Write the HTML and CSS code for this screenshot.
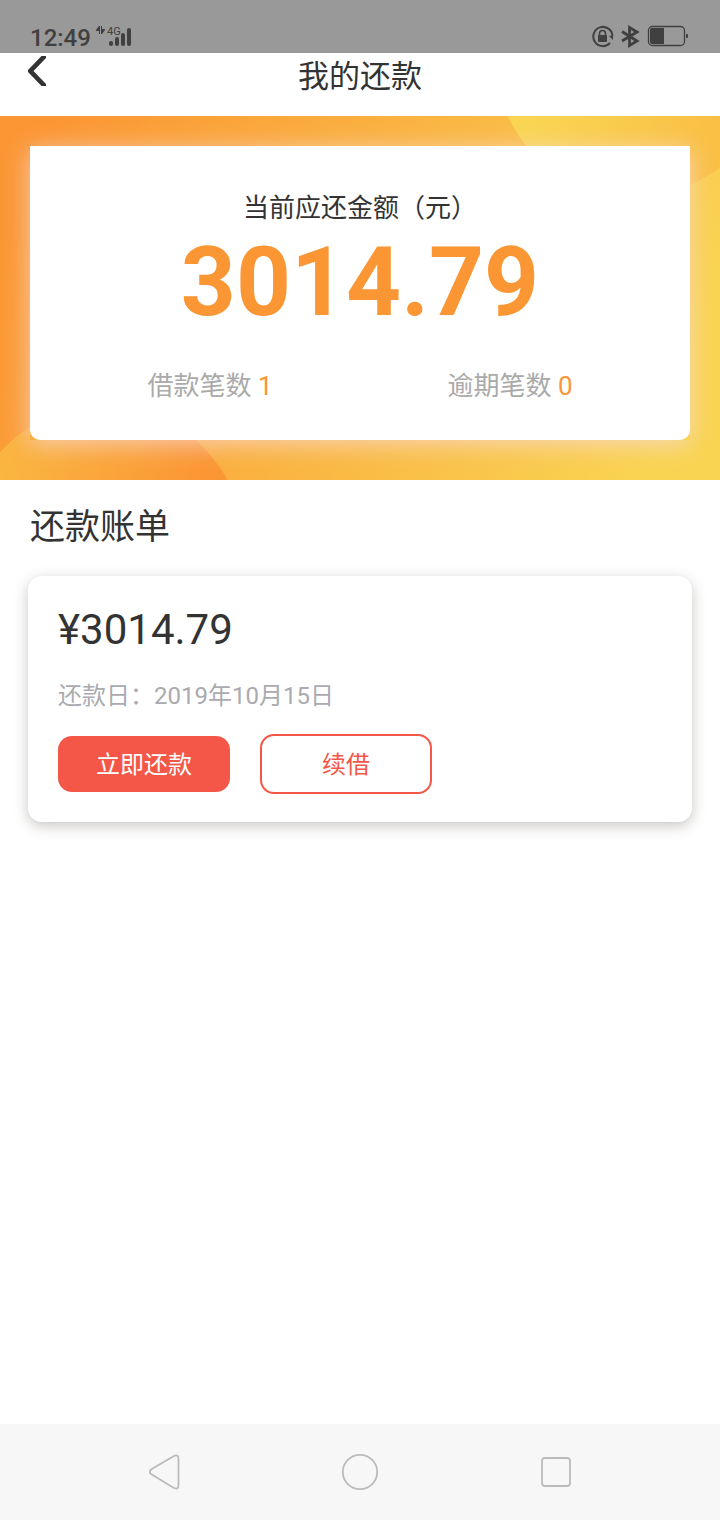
FILE: index.html
```
<!DOCTYPE html>
<html lang="zh-CN">
<head>
<meta charset="utf-8">
<meta name="viewport" content="width=device-width, initial-scale=1">
<title>我的还款</title>
<link rel="stylesheet" href="styles.css">
</head>
<body>
<div class="screen">
  <div class="status">
    <div class="status-left">
      <span class="clock">12:49</span>
      <svg class="signal" width="37" height="26" viewBox="0 0 37 26" aria-hidden="true">
        <path d="M0 5L3 1H4V9H3V6H0ZM5 1H6V4H9V5L6 9H5Z" fill="#404040"/>
        <text x="11" y="10" class="network">4G</text>
        <g fill="#404040">
          <rect x="13" y="16" width="4" height="5" rx="2"/>
          <rect x="19" y="12" width="4" height="9" rx="2"/>
          <rect x="25" y="8" width="4" height="13" rx="2"/>
          <rect x="31" y="3" width="4" height="18" rx="2"/>
        </g>
      </svg>
    </div>
    <svg class="status-icons" width="98" height="24" viewBox="0 0 98 24" fill="none" stroke="#404040" aria-hidden="true">
      <path d="M18 19A9.600 9.600 0 1 1 20.500 12" stroke-width="2"/>
      <path d="M17 12L21 11.500V16Z" fill="#404040" stroke="none"/>
      <rect x="6" y="11" width="9" height="7" rx="1" fill="#404040" stroke="none"/>
      <path d="M7.500 12V9.500a3 3 0 0 1 6 0V12" stroke-width="1.600"/>
      <path d="M30 7.500L45 17L37.500 21.500V3.500L45 8L30 17" stroke-width="2.800"/>
      <rect x="56.500" y="2.500" width="36" height="19" rx="4" stroke-width="1.300"/>
      <path d="M60 4H72V20H60a2 2 0 0 1-2-2V6a2 2 0 0 1 2-2Z" fill="#404040" stroke="none"/>
      <path d="M94 10h1a1 1 0 0 1 1 1v2a1 1 0 0 1-1 1h-1Z" fill="#404040" stroke="none"/>
    </svg>
  </div>

  <header class="header">
    <button class="back" type="button" aria-label="返回">
      <svg width="18" height="30" viewBox="0 0 18 30"><path d="M18 0H13.500L0 14V16L13.500 30H18V28L5.500 15L18 2Z" fill="#333"/></svg>
    </button>
    <h1 class="title">我的还款</h1>
  </header>

  <main class="content">
    <section class="banner">
      <svg class="banner-art" viewBox="0 0 720 364" preserveAspectRatio="none" aria-hidden="true">
        <defs>
          <linearGradient id="base" gradientUnits="userSpaceOnUse" x1="30" y1="60" x2="660" y2="320">
            <stop offset="0" stop-color="#fb9634"/><stop offset="0.500" stop-color="#fab441"/><stop offset="1" stop-color="#f9d452"/>
          </linearGradient>
          <linearGradient id="low" gradientUnits="userSpaceOnUse" x1="0" y1="364" x2="200" y2="340">
            <stop offset="0" stop-color="#fab641"/><stop offset="1" stop-color="#fb9634"/>
          </linearGradient>
          <linearGradient id="high" gradientUnits="userSpaceOnUse" x1="535" y1="10" x2="710" y2="40">
            <stop offset="0" stop-color="#f9d552"/><stop offset="1" stop-color="#fabf45"/>
          </linearGradient>
        </defs>
        <rect width="720" height="364" fill="url(#base)"/>
        <circle cx="104" cy="430" r="140" fill="url(#low)"/>
        <circle cx="634" cy="-58" r="139" fill="url(#high)"/>
      </svg>
      <div class="glow">
        <div class="summary">
          <h2 class="summary-label">当前应还金额（元）</h2>
          <p class="total">3014.79</p>
          <div class="counts">
            <p class="count">借款笔数 <span class="number">1</span></p>
            <p class="count">逾期笔数 <span class="number">0</span></p>
          </div>
        </div>
      </div>
    </section>

    <section class="bills">
      <h2 class="bills-title">还款账单</h2>
      <article class="bill">
        <p class="amount">¥3014.79</p>
        <p class="due">还款日：2019年10月15日</p>
        <div class="actions">
          <button class="pay" type="button">立即还款</button>
          <button class="renew" type="button">续借</button>
        </div>
      </article>
    </section>
  </main>

  <nav class="navbar" aria-label="系统导航">
    <button class="nav-button" type="button" aria-label="后退"><svg width="40" height="40" viewBox="0 0 40 40"><path d="M7 17.500L29.500 4.200Q34.500 2 34.500 6.500V33.500Q34.500 38 29.500 35.800L7 22Q4.500 20 7 17.500Z"/></svg></button>
    <button class="nav-button" type="button" aria-label="主页"><svg width="40" height="40" viewBox="0 0 40 40"><circle cx="20" cy="20" r="17.200"/></svg></button>
    <button class="nav-button" type="button" aria-label="最近任务"><svg width="40" height="40" viewBox="0 0 40 40"><rect x="6" y="6" width="28" height="28" rx="3"/></svg></button>
  </nav>
</div>
</body>
</html>
```
FILE: styles.css
```
* { box-sizing: border-box; }

body {
  margin: 0;
  background: #fff;
  color: #333;
  font-family: Roboto, "Noto Sans CJK SC", sans-serif;
}

h1, h2, p { margin: 0; font-weight: 400; }

button {
  padding: 0;
  border: 0;
  background: none;
  font: inherit;
}

svg { display: block; }

.screen {
  display: flex;
  flex-direction: column;
  min-height: 100vh;
}

.status {
  display: flex;
  justify-content: space-between;
  align-items: flex-start;
  padding: 24px 30px 1px;
  background: #999;
}

.status-left { display: flex; gap: 5px; }

.clock {
  color: #404040;
  font-size: 24px;
  font-weight: 500;
  line-height: 28px;
}

.signal { margin-top: 1px; }

.network {
  fill: #404040;
  font-size: 11px;
}

.header {
  display: grid;
  grid-template-columns: 60px 1fr 60px;
  align-items: start;
  height: 63px;
}

.back {
  justify-self: start;
  padding: 3px 14px 10px 28px;
}

.title {
  font-size: 31px;
  line-height: 48px;
  text-align: center;
}

.content { flex: 1; }

.banner {
  position: relative;
  padding: 30px 30px 40px;
}

.banner-art {
  position: absolute;
  inset: 0;
  width: 100%;
  height: 100%;
}

.glow {
  position: relative;
  box-shadow: 0 4px 24px rgba(248, 218, 212, 0.8);
}

.summary {
  padding: 44px 30px 34px;
  border-radius: 0 0 10px 10px;
  background: #fff;
  text-align: center;
}

.summary-label {
  font-size: 26px;
  line-height: 36px;
}

.total {
  margin-bottom: 28px;
  color: #fb9634;
  font-size: 96px;
  font-weight: 700;
  line-height: 112px;
}

.counts {
  display: grid;
  grid-template-columns: 1fr 1fr;
}

.count {
  color: #aaa;
  font-size: 26px;
  line-height: 40px;
}

.number { color: #fb9634; }

.bills { padding: 22px 28px; }

.bills-title {
  padding-left: 2px;
  font-size: 35px;
  line-height: 52px;
}

.bill {
  margin-top: 22px;
  padding: 30px;
  border-radius: 14px;
  background: #fff;
  box-shadow: 0 4px 14px rgba(60, 50, 40, 0.28);
}

.amount {
  font-size: 42px;
  line-height: 48px;
}

.due {
  margin-top: 24px;
  color: #aaaab0;
  font-size: 24px;
  line-height: 36px;
}

.actions {
  display: flex;
  align-items: center;
  gap: 30px;
  margin-top: 20px;
  margin-bottom: -2px;
}

.pay, .renew {
  width: 172px;
  height: 56px;
  padding-bottom: 3px;
  border-radius: 14px;
  font-size: 24px;
}

.pay { background: #f45747; color: #fff; }

.renew {
  height: 60px;
  border: 2px solid #f45747;
  color: #f45747;
}

.navbar {
  display: flex;
  justify-content: space-around;
  align-items: center;
  height: 96px;
  padding: 0 66px;
  background: #f7f7f7;
}

.nav-button svg {
  fill: none;
  stroke: #bbb;
  stroke-width: 1.8px;
}
```
